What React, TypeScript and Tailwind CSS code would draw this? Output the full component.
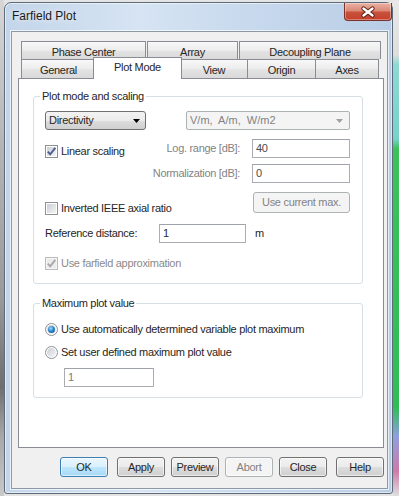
import React from "react";

const font = "font-['Liberation_Sans',Arial,sans-serif] text-[11px] leading-[13px] tracking-[-0.3px] whitespace-nowrap";
const btnGrad = "bg-[linear-gradient(180deg,#f2f2f2_0%,#ebebeb_50%,#dddddd_51%,#cfcfcf_100%)]";

function Check({ checked = false, disabled = false }: { checked?: boolean; disabled?: boolean }) {
  return (
    <span
      className={`relative block w-[13px] h-[13px] shrink-0 border ${
        disabled ? "border-[#bcbcbc] bg-[#f4f4f4]" : "border-[#8e8f8f] bg-white"
      }`}
    >
      <span
        className={`absolute left-[1px] top-[1px] w-[9px] h-[9px] ${
          disabled ? "bg-[#ececec]" : "bg-[linear-gradient(135deg,#c9cdd3,#f4f5f6)]"
        }`}
      />
      {checked && (
        <svg className="absolute left-0 top-0" width="11" height="11" viewBox="0 0 11 11">
          <path
            d="M1.8 5.6 L4.2 8.3 L9.3 1.8"
            fill="none"
            stroke={disabled ? "#a8a8a8" : "#4b5e8c"}
            strokeWidth="1.9"
          />
        </svg>
      )}
    </span>
  );
}

function Radio({ checked = false }: { checked?: boolean }) {
  return (
    <span className="relative block w-[13px] h-[13px] shrink-0 rounded-full border border-[#8e8f8f] bg-white">
      <span className="absolute left-[1px] top-[1px] w-[9px] h-[9px] rounded-full bg-[linear-gradient(135deg,#c9cdd3,#f6f6f6)]" />
      {checked && (
        <span className="absolute left-[2px] top-[2px] w-[7px] h-[7px] rounded-full bg-[radial-gradient(circle_at_40%_35%,#a6dcfb_0%,#2a86cf_45%,#0b4f8e_100%)]" />
      )}
    </span>
  );
}

function Field({ value, w, tone = "text-[#262626]" }: { value: string; w: string; tone?: string }) {
  return (
    <div className={`h-[19px] ${w} shrink-0 border border-[#abadb3] border-t-[#9ea3ab] bg-white pl-[3px] flex items-center ${tone}`}>
      {value}
    </div>
  );
}

function Arrow({ color }: { color: string }) {
  return (
    <svg width="7" height="4" viewBox="0 0 7 4">
      <polygon points="0,0 7,0 3.5,4" fill={color} />
    </svg>
  );
}

function Group({ label, className, children }: { label: string; className: string; children: React.ReactNode }) {
  return (
    <div className={`relative w-[330px] border border-[#d5dfe5] rounded-[3px] ${className}`}>
      <div className="absolute left-[6px] top-[-7px] px-[2px] bg-white text-[#262626]">{label}</div>
      {children}
    </div>
  );
}

function Btn({
  children,
  kind = "normal",
  className = "",
}: {
  children: React.ReactNode;
  kind?: "normal" | "default" | "disabled";
  className?: string;
}) {
  const style =
    kind === "default"
      ? "border-[#3c7fb1] bg-[linear-gradient(180deg,#eaf6fd_0%,#d9f0fc_50%,#bee6fd_51%,#a7d9f5_100%)] text-[#262626]"
      : kind === "disabled"
      ? "border-[#adb2b5] bg-[#f4f4f4] text-[#838383]"
      : `border-[#707070] ${btnGrad} text-[#262626]`;
  return (
    <div
      className={`w-[48px] h-[20px] shrink-0 rounded-[3px] border flex items-center justify-center shadow-[inset_0_0_0_1px_rgba(255,255,255,0.6)] ${style} ${className}`}
    >
      {children}
    </div>
  );
}

function Tab({ w, children, extra = "" }: { w: string; children: React.ReactNode; extra?: string }) {
  return (
    <div
      className={`${w} shrink-0 text-center text-[#262626] border-[#898c95] bg-[linear-gradient(180deg,#f8f8f8_0%,#ececec_50%,#e2e2e2_55%,#dadada_100%)] ${extra}`}
    >
      {children}
    </div>
  );
}

export default function App() {
  return (
    <div className={`w-[399px] h-[496px] overflow-hidden flex bg-[#e4e4e4] ${font}`}>
      {/* desktop left strip */}
      <div className="w-[4px] h-full shrink-0 bg-[linear-gradient(180deg,#d6d6d6_0%,#b4b4b4_30%,#9a9a9a_60%,#6e6e6e_78%,#a8a8a8_88%,#c8c8c8_100%)]" />

      {/* window */}
      <div className="mt-[2px] w-[389px] h-[492px] shrink-0 flex flex-col rounded-t-[7px] rounded-b-[3px] border border-[#5d6b79] bg-[linear-gradient(90deg,#c3d5ea_0%,#d6e4f3_35%,#c9daee_60%,#b8cde5_100%)] shadow-[inset_0_0_0_1px_rgba(255,255,255,0.55)]">
        {/* title bar */}
        <div className="h-[28px] flex items-start shrink-0">
          <div className="pl-[7px] pt-[6px] text-[12px] leading-[14px] tracking-normal text-[#1a1a1a] [text-shadow:0_0_6px_rgba(255,255,255,0.95)]">
            Farfield Plot
          </div>
          <div className="ml-auto w-[48px] h-[18px] rounded-b-[4px] border border-t-0 border-[#7a3328] bg-[linear-gradient(180deg,#eab1a5_0%,#dc8a78_45%,#c9513c_55%,#c4402c_100%)] shadow-[inset_0_0_0_1px_rgba(255,255,255,0.35)] flex items-center justify-center">
            <svg width="16" height="12" viewBox="0 0 16 12">
              <path d="M3.5 2.5 L12.5 9.5 M12.5 2.5 L3.5 9.5" stroke="#5a1d14" strokeWidth="4.2" strokeLinecap="round" />
              <path d="M3.5 2.5 L12.5 9.5 M12.5 2.5 L3.5 9.5" stroke="#ffffff" strokeWidth="2.4" strokeLinecap="round" />
            </svg>
          </div>
        </div>

        {/* client area */}
        <div className="ml-[6px] w-[377px] h-[458px] border border-[#8b98a5] bg-[#f0f0f0] shadow-[0_0_0_1px_rgba(255,255,255,0.7)]">
          <div className="pt-[9px] pl-[6px]">
            <div className="w-[366px]">
              {/* tab strip */}
              <div className="h-[37px] pl-[3px]">
                <div className="flex gap-[1px] h-[18px]">
                  <Tab w="w-[125px]" extra="border border-b-0 pt-[4px]">Phase Center</Tab>
                  <Tab w="w-[91px]" extra="border border-b-0 pt-[4px]">Array</Tab>
                  <Tab w="w-[142px]" extra="border border-b-0 pt-[4px]">Decoupling Plane</Tab>
                </div>
                <div className="flex h-[19px] items-end">
                  <Tab w="w-[74px]" extra="h-[19px] border-l border-t pt-[4px]">General</Tab>
                  <div className="relative z-10 -mx-[2px] w-[89px] h-[22px] translate-y-[1px] shrink-0 bg-white border border-b-0 border-[#898c95] text-center pt-[3px] text-[#262626]">
                    Plot Mode
                  </div>
                  <Tab w="w-[67px]" extra="h-[19px] border-l border-t pt-[4px]">View</Tab>
                  <Tab w="w-[68px]" extra="h-[19px] border-l border-t pt-[4px]">Origin</Tab>
                  <Tab w="w-[64px]" extra="h-[19px] border-l border-t border-r pt-[4px]">Axes</Tab>
                </div>
              </div>

              {/* panel */}
              <div className="h-[370px] border border-[#898c95] bg-white pt-[17px] pl-[14px]">
                <Group label="Plot mode and scaling" className="h-[188px] pt-[14px] pl-[11px] pr-[12px]">
                  {/* row A */}
                  <div className="flex items-center h-[19px]">
                    <div className={`w-[101px] h-[19px] rounded-[3px] border border-[#707070] ${btnGrad} flex items-center pl-[3px] pr-[5px] text-[#262626]`}>
                      <span>Directivity</span>
                      <span className="ml-auto flex">
                        <Arrow color="#000" />
                      </span>
                    </div>
                    <div className="ml-[40px] w-[164px] h-[19px] rounded-[2px] border border-[#adb2b5] bg-[#f4f4f4] flex items-center pl-[3px] pr-[6px] text-[#838383] tracking-[0px]">
                      <span>V/m,&nbsp; A/m,&nbsp; W/m2</span>
                      <span className="ml-auto flex">
                        <Arrow color="#a0a0a0" />
                      </span>
                    </div>
                  </div>

                  {/* block B */}
                  <div className="mt-[9px] flex">
                    <div className="w-[90px] flex flex-col pt-[6px] shrink-0">
                      <div className="flex items-center gap-[3px] h-[13px] text-[#262626]">
                        <Check checked />
                        <span>Linear scaling</span>
                      </div>
                      <div className="mt-[44px] flex items-center gap-[3px] h-[13px] text-[#262626]">
                        <Check />
                        <span>Inverted IEEE axial ratio</span>
                      </div>
                    </div>
                    <div className="flex-1 flex flex-col items-end">
                      <div className="flex items-center gap-[12px]">
                        <span className="text-[#838383]">Log. range [dB]:</span>
                        <Field value="40" w="w-[98px]" tone="text-[#4a4a4a]" />
                      </div>
                      <div className="mt-[6px] flex items-center gap-[12px]">
                        <span className="text-[#838383]">Normalization [dB]:</span>
                        <Field value="0" w="w-[98px]" tone="text-[#4a4a4a]" />
                      </div>
                      <div className="mt-[9px] w-[97px] h-[21px] rounded-[3px] border border-[#adb2b5] bg-[#f4f4f4] text-[#838383] flex items-center justify-center">
                        Use current max.
                      </div>
                    </div>
                  </div>

                  {/* reference distance */}
                  <div className="mt-[9px] flex items-center h-[19px] text-[#262626]">
                    <span className="w-[114px] shrink-0">Reference distance:</span>
                    <Field value="1" w="w-[87px]" />
                    <span className="ml-[9px]">m</span>
                  </div>

                  <div className="mt-[14px] flex items-center gap-[3px] h-[13px] text-[#8a8a8a]">
                    <Check checked disabled />
                    <span>Use farfield approximation</span>
                  </div>
                </Group>

                <Group label="Maximum plot value" className="mt-[19px] h-[95px] pt-[19px] pl-[11px]">
                  <div className="flex items-center gap-[3px] h-[13px] text-[#262626]">
                    <Radio checked />
                    <span>Use automatically determined variable plot maximum</span>
                  </div>
                  <div className="mt-[10px] flex items-center gap-[3px] h-[13px] text-[#262626]">
                    <Radio />
                    <span>Set user defined maximum plot value</span>
                  </div>
                  <div className="mt-[9px] ml-[19px]">
                    <Field value="1" w="w-[90px]" tone="text-[#7a7a7a]" />
                  </div>
                </Group>
              </div>

              {/* buttons */}
              <div className="mt-[9px] flex justify-end">
                <Btn kind="default">OK</Btn>
                <Btn className="ml-[9px]">Apply</Btn>
                <Btn className="ml-[6px]">Preview</Btn>
                <Btn kind="disabled" className="ml-[6px]">Abort</Btn>
                <Btn className="ml-[6px]">Close</Btn>
                <Btn className="ml-[9px]">Help</Btn>
              </div>
            </div>
          </div>
        </div>
      </div>

      {/* desktop right strip */}
      <div className="flex-1 h-full bg-[linear-gradient(180deg,#e8e8e8_0%,#dedede_11%,#8fd9d2_13%,#79d2c9_28%,#3dc25a_30%,#2fbe55_82%,#8f9fe0_88%,#cf7aa8_95%,#e0e0e0_100%)]" />
    </div>
  );
}
